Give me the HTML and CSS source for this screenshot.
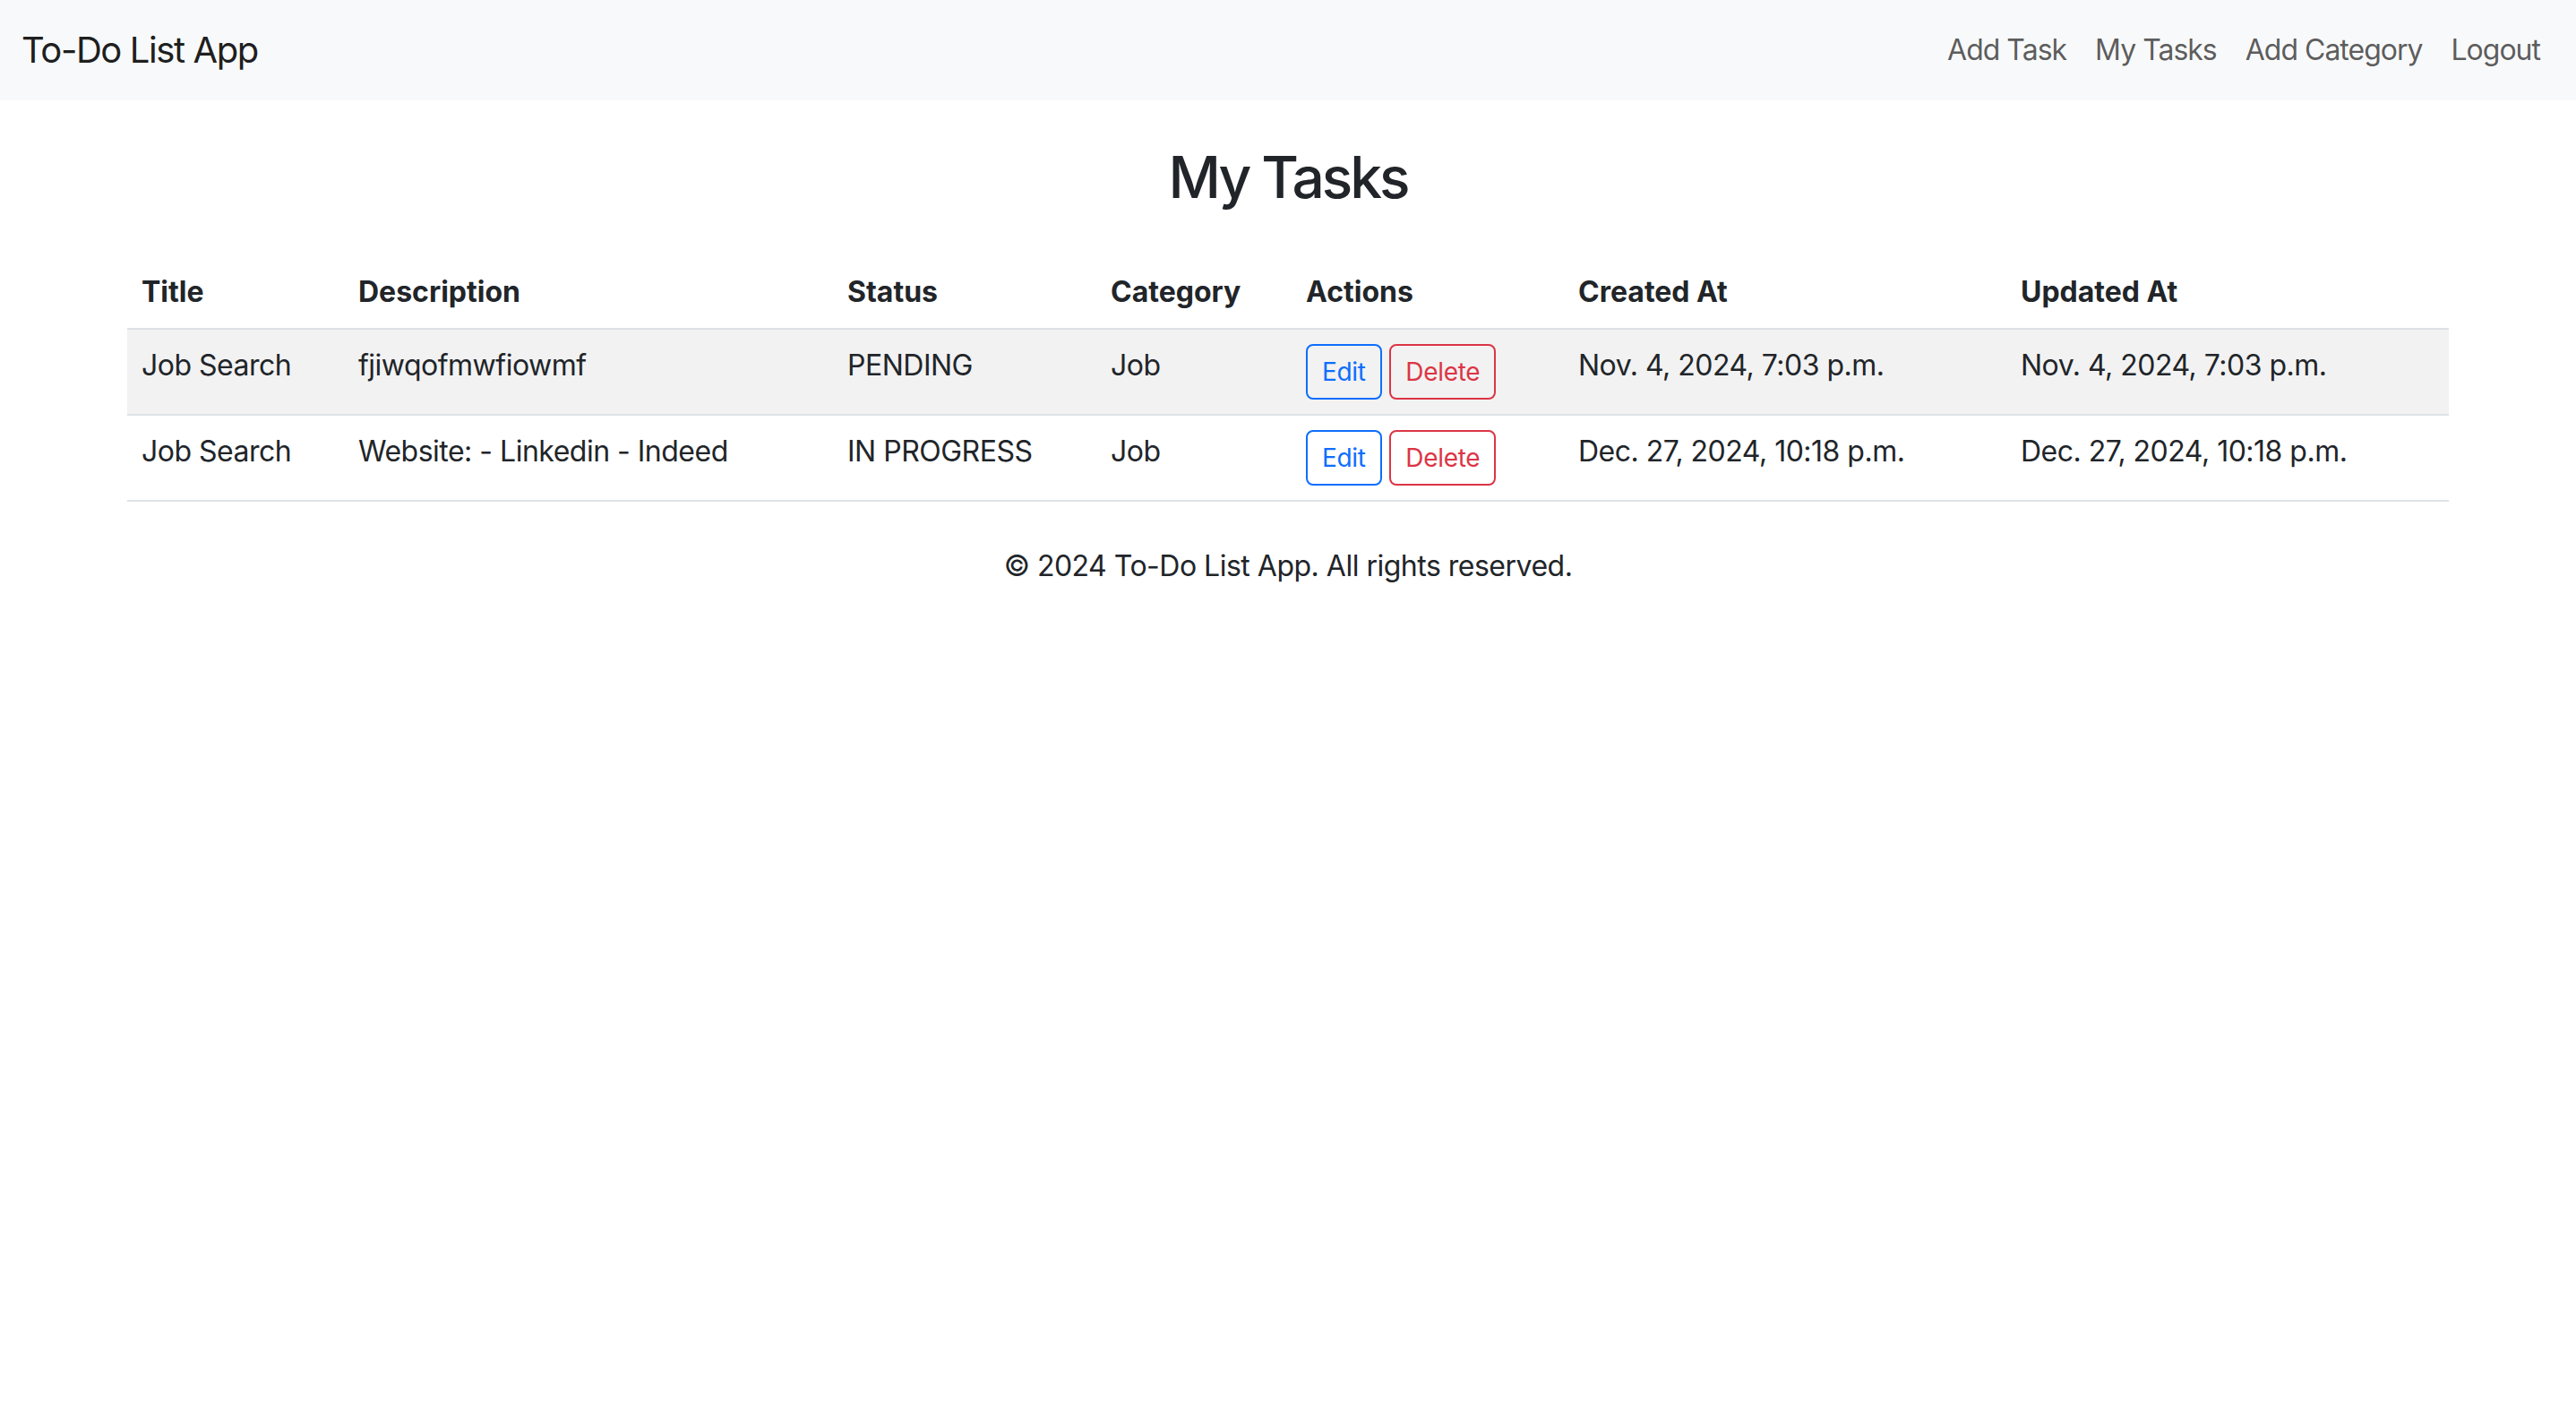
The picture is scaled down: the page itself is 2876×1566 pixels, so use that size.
FILE: index.html
```html
<!DOCTYPE html>
<html lang="en">
<head>
<meta charset="utf-8">
<title>To-Do List App</title>
<link rel="stylesheet" href="styles.css">
</head>
<body>
<nav class="navbar">
  <a class="brand" href="#">To-Do List App</a>
  <ul class="nav">
    <li><a class="nav-link" href="#">Add Task</a></li>
    <li><a class="nav-link" href="#">My Tasks</a></li>
    <li><a class="nav-link" href="#">Add Category</a></li>
    <li><a class="nav-link" href="#">Logout</a></li>
  </ul>
</nav>
<main class="container">
  <h2 class="page-title">My Tasks</h2>
  <table class="table">
    <colgroup>
      <col class="c-title"><col class="c-desc"><col class="c-status"><col class="c-cat"><col class="c-act"><col class="c-date"><col class="c-date">
    </colgroup>
    <thead>
      <tr>
        <th>Title</th><th>Description</th><th>Status</th><th>Category</th><th>Actions</th><th>Created At</th><th>Updated At</th>
      </tr>
    </thead>
    <tbody>
      <tr class="striped">
        <td>Job Search</td>
        <td>fjiwqofmwfiowmf</td>
        <td>PENDING</td>
        <td>Job</td>
        <td><a class="btn btn-primary" href="#">Edit</a> <a class="btn btn-danger" href="#">Delete</a></td>
        <td>Nov. 4, 2024, 7:03 p.m.</td>
        <td>Nov. 4, 2024, 7:03 p.m.</td>
      </tr>
      <tr>
        <td>Job Search</td>
        <td>Website: - Linkedin - Indeed</td>
        <td>IN PROGRESS</td>
        <td>Job</td>
        <td><a class="btn btn-primary" href="#">Edit</a> <a class="btn btn-danger" href="#">Delete</a></td>
        <td>Dec. 27, 2024, 10:18 p.m.</td>
        <td>Dec. 27, 2024, 10:18 p.m.</td>
      </tr>
    </tbody>
  </table>
  <footer class="footer">© 2024 To-Do List App. All rights reserved.</footer>
</main>
</body>
</html>
```
FILE: styles.css
```css
* { box-sizing: border-box; }
html, body { margin: 0; padding: 0; }
body {
  font-family: Inter, "Noto Sans", "Liberation Sans", sans-serif;
  font-size: 32px;
  line-height: 1.5;
  letter-spacing: -0.5px;
  color: #212529;
  background: #fff;
}
a { text-decoration: none; }

.navbar {
  display: flex;
  justify-content: space-between;
  align-items: center;
  background: #f8f9fa;
  padding: 16px 24px;
}
.brand {
  font-size: 40px;
  line-height: 60px;
  padding: 10px 0;
  letter-spacing: -1.4px;
  color: rgba(0,0,0,0.9);
}
.nav {
  display: flex;
  list-style: none;
  margin: 0;
  padding: 0;
}
.nav-link {
  display: block;
  padding: 16px;
  line-height: 48px;
  letter-spacing: -1px;
  color: rgba(0,0,0,0.65);
}

.container {
  width: 2592px;
  margin: 48px auto 0;
}
.page-title {
  text-align: center;
  font-size: 64px;
  font-weight: 500;
  line-height: 1.2;
  letter-spacing: -3px;
  margin: 0 0 49px;
}
.table {
  width: 100%;
  border-collapse: collapse;
  table-layout: fixed;
  margin-bottom: 32px;
}
.c-title { width: 242px; }
.c-desc { width: 546px; }
.c-status { width: 294px; }
.c-cat { width: 218px; }
.c-act { width: 304px; }
.c-date { width: 494px; }
.table th, .table td {
  padding: 16px;
  text-align: left;
  vertical-align: top;
  border-bottom: 2px solid #dee2e6;
  white-space: nowrap;
}
.table th { font-weight: 700; vertical-align: bottom; letter-spacing: 0; }
.striped td { background: #f2f2f2; }

.btn {
  display: inline-block;
  font-size: 28px;
  line-height: 42px;
  padding: 8px 16px;
  border: 2px solid;
  border-radius: 8px;
  letter-spacing: -0.3px;
  background: transparent;
}
.btn-primary { color: #0d6efd; border-color: #0d6efd; }
.btn-danger { color: #dc3545; border-color: #dc3545; }

.footer {
  text-align: center;
  margin-top: 48px;
}
```
